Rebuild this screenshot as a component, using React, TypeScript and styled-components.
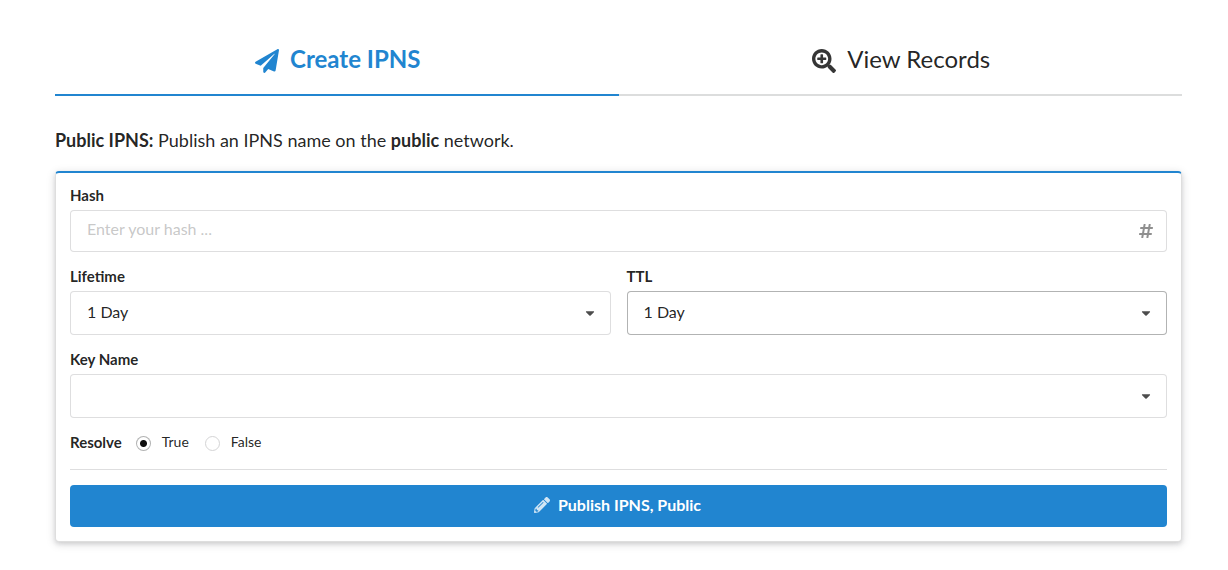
import React, { useState } from "react";
import styled, { createGlobalStyle } from "styled-components";
import { FaPaperPlane, FaSearchPlus, FaHashtag, FaPencilAlt, FaCaretDown } from "react-icons/fa";

const blue = "#2185d0";
const ink = "rgba(0, 0, 0, 0.87)";
const line = "rgba(34, 36, 38, 0.15)";

const GlobalStyle = createGlobalStyle`
  *, *::before, *::after { box-sizing: border-box; }
  body {
    margin: 0;
    background: #fff;
    color: ${ink};
    font-family: Lato, "Liberation Sans", sans-serif;
    font-size: 16px;
    line-height: 20px;
  }
`;

const Page = styled.main`
  padding: 24px 46px 28px 55px;
`;

const Tabs = styled.nav`
  display: grid;
  grid-template-columns: 1fr 1fr;
`;

const Tab = styled.button<{ $active: boolean }>`
  display: flex;
  align-items: center;
  justify-content: center;
  gap: 11px;
  height: 72px;
  padding: 0 0 2px 2px;
  border: 0;
  border-bottom: 2px solid ${(p) => (p.$active ? blue : "#dcdddd")};
  background: none;
  color: ${(p) => (p.$active ? blue : ink)};
  font-family: inherit;
  font-size: 24px;
  font-weight: ${(p) => (p.$active ? 700 : 400)};
  cursor: pointer;

  svg {
    width: 24px;
    height: 24px;
    margin-top: 6px;
    opacity: ${(p) => (p.$active ? 1 : 0.9)};
  }
`;

const Intro = styled.p`
  margin: 32px 0 19px;
  font-size: 18px;
  line-height: 24px;
`;

const Card = styled.form`
  display: flex;
  flex-direction: column;
  gap: 16px;
  padding: 14px;
  border: 1px solid ${line};
  border-top: 2px solid ${blue};
  border-radius: 4px;
  box-shadow: 0 2px 4px 0 rgba(34, 36, 38, 0.12), 0 2px 10px 0 rgba(34, 36, 38, 0.15);
`;

const FieldRow = styled.div`
  display: grid;
  grid-template-columns: 1fr 1fr;
  gap: 16px;
`;

const FieldBox = styled.div`
  display: flex;
  flex-direction: column;
  gap: 6px;
`;

const Label = styled.label`
  font-size: 15px;
  font-weight: 700;
  line-height: 17px;
`;

const Control = styled.div`
  position: relative;
  display: flex;
`;

const TextInput = styled.input`
  width: 100%;
  height: 42px;
  padding: 0 44px 5px 16px;
  border: 1px solid ${line};
  border-radius: 4px;
  background: #fff;
  color: ${ink};
  font: inherit;
  outline: none;

  &::placeholder {
    color: rgba(191, 191, 191, 0.87);
    opacity: 1;
  }
`;

const SelectInput = styled.select<{ $hovered?: boolean }>`
  appearance: none;
  width: 100%;
  height: 44px;
  padding: 0 40px 2px 16px;
  border: 1px solid ${(p) => (p.$hovered ? "rgba(34, 36, 38, 0.35)" : line)};
  border-radius: 4px;
  background: #fff;
  color: ${ink};
  font: inherit;
  outline: none;
`;

const ControlIcon = styled.span`
  position: absolute;
  top: 0;
  right: 0;
  bottom: 0;
  display: flex;
  align-items: center;
  justify-content: center;
  width: 42px;
  color: rgba(0, 0, 0, 0.44);
  font-size: 16px;
  pointer-events: none;
`;

const CaretIcon = styled(ControlIcon)`
  color: rgba(0, 0, 0, 0.7);
  font-size: 14px;
`;

const RadioGroup = styled.div`
  display: flex;
  align-items: center;
  gap: 14px;
  height: 19px;
  padding-bottom: 3px;
`;

const RadioOptions = styled.div`
  display: flex;
  align-items: center;
  gap: 16px;
`;

const GroupTitle = styled.span`
  font-size: 15px;
  font-weight: 700;
`;

const RadioLabel = styled.label`
  display: flex;
  align-items: center;
  gap: 11px;
  font-size: 14px;
`;

const Radio = styled.input`
  appearance: none;
  width: 15px;
  height: 15px;
  margin: 3px 0 0;
  border: 1px solid #d4d4d5;
  border-radius: 50%;
  background: #fff;

  &:checked {
    border-color: rgba(34, 36, 38, 0.35);
    background: radial-gradient(circle, rgba(0, 0, 0, 0.95) 3px, #fff 4px);
  }
`;

const Divider = styled.hr`
  width: 100%;
  margin: 0 0 -1px;
  border: 0;
  border-top: 1px solid ${line};
`;

const SubmitButton = styled.button`
  display: flex;
  align-items: center;
  justify-content: center;
  gap: 8px;
  height: 42px;
  padding: 0 2px 3px 0;
  border: 0;
  border-radius: 4px;
  background: ${blue};
  color: #fff;
  font-family: inherit;
  font-size: 16px;
  font-weight: 700;
  cursor: pointer;

  svg {
    opacity: 0.8;
  }
`;

interface SelectFieldProps {
  id: string;
  label: string;
  options: string[];
  hovered?: boolean;
}

function SelectField({ id, label, options, hovered }: SelectFieldProps) {
  return (
    <FieldBox>
      <Label htmlFor={id}>{label}</Label>
      <Control>
        <SelectInput id={id} $hovered={hovered}>
          {options.map((option) => (
            <option key={option}>{option}</option>
          ))}
        </SelectInput>
        <CaretIcon>
          <FaCaretDown />
        </CaretIcon>
      </Control>
    </FieldBox>
  );
}

export default function App() {
  const [tab, setTab] = useState<"create" | "view">("create");
  const [resolve, setResolve] = useState(true);

  return (
    <>
      <GlobalStyle />
      <Page>
        <Tabs>
          <Tab type="button" $active={tab === "create"} onClick={() => setTab("create")}>
            <FaPaperPlane />
            Create IPNS
          </Tab>
          <Tab type="button" $active={tab === "view"} onClick={() => setTab("view")}>
            <FaSearchPlus />
            View Records
          </Tab>
        </Tabs>
        <Intro>
          <b>Public IPNS:</b> Publish an IPNS name on the <b>public</b> network.
        </Intro>
        <Card onSubmit={(e) => e.preventDefault()}>
          <FieldBox>
            <Label htmlFor="hash">Hash</Label>
            <Control>
              <TextInput id="hash" type="text" placeholder="Enter your hash ..." />
              <ControlIcon>
                <FaHashtag />
              </ControlIcon>
            </Control>
          </FieldBox>
          <FieldRow>
            <SelectField id="lifetime" label="Lifetime" options={["1 Day"]} />
            <SelectField id="ttl" label="TTL" options={["1 Day"]} hovered />
          </FieldRow>
          <SelectField id="key" label="Key Name" options={[""]} />
          <RadioGroup role="radiogroup" aria-labelledby="resolve">
            <GroupTitle id="resolve">Resolve</GroupTitle>
            <RadioOptions>
              <RadioLabel>
                <Radio type="radio" name="resolve" checked={resolve} onChange={() => setResolve(true)} />
                True
              </RadioLabel>
              <RadioLabel>
                <Radio type="radio" name="resolve" checked={!resolve} onChange={() => setResolve(false)} />
                False
              </RadioLabel>
            </RadioOptions>
          </RadioGroup>
          <Divider />
          <SubmitButton type="submit">
            <FaPencilAlt />
            Publish IPNS, Public
          </SubmitButton>
        </Card>
      </Page>
    </>
  );
}
